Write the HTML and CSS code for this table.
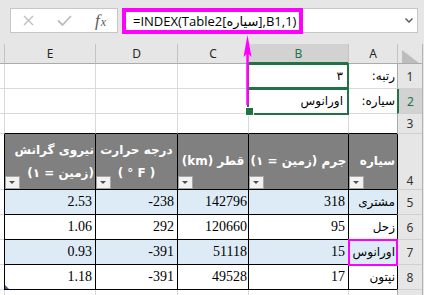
FILE: index.html
```html
<!DOCTYPE html>
<html lang="fa">
<head>
<meta charset="utf-8">
<link rel="stylesheet" href="styles.css">
</head>
<body>
<div class="toolbar">
  <div class="fxbox">
    <svg class="i-x" width="11" height="11" viewBox="0 0 11 11"><path d="M1 1L10 10M10 1L1 10"/></svg>
    <svg class="i-ok" width="15" height="11" viewBox="0 0 15 11"><path d="M1 5.5L5.5 10L14 1"/></svg>
    <span class="fx"><i class="fx-f">f</i><i class="fx-x">x</i></span>
  </div>
  <div class="fbar">
    <div class="formula" dir="ltr">=INDEX(Table2[سیاره],B1,1)</div>
    <svg class="chev" width="8" height="5" viewBox="0 0 8 5"><path d="M0.5 0.5L4 4L7.5 0.5"/></svg>
  </div>
</div>

<div class="sheet" dir="rtl">
  <div class="row">
    <div class="c strip"></div>
    <div class="c colh corner"><svg width="17" height="13" viewBox="0 0 17 13"><path d="M0 0V13H17Z"/></svg></div>
    <div class="c colh">A</div>
    <div class="c colh sel">B</div>
    <div class="c colh">C</div>
    <div class="c colh">D</div>
    <div class="c colh">E</div>
    <div class="c colh f"></div>
  </div>

  <div class="row">
    <div class="c strip"></div>
    <div class="c rh">1</div>
    <div class="c ca"><span class="ar">رتبه:</span></div>
    <div class="c cb sel1"><span class="ar">۳</span></div>
    <div class="c"></div>
    <div class="c"></div>
    <div class="c"></div>
    <div class="c f"></div>
  </div>

  <div class="row">
    <div class="c strip"></div>
    <div class="c rh sel">2</div>
    <div class="c ca"><span class="ar">سیاره:</span></div>
    <div class="c cb sel2"><span class="ar">اورانوس</span></div>
    <div class="c"></div>
    <div class="c"></div>
    <div class="c"></div>
    <div class="c f"></div>
  </div>

  <div class="row">
    <div class="c strip"></div>
    <div class="c rh">3</div>
    <div class="c tt"></div>
    <div class="c tt"></div>
    <div class="c tt"></div>
    <div class="c tt"></div>
    <div class="c tt"></div>
    <div class="c f"></div>
  </div>

  <div class="row">
    <div class="c strip"></div>
    <div class="c rh tb low">4</div>
    <div class="c th"><span>سیاره</span><span class="dd"></span></div>
    <div class="c th mid"><span>جرم (زمین = ۱)</span><span class="dd"></span></div>
    <div class="c th mid"><span>قطر (km)</span><span class="dd"></span></div>
    <div class="c th mid"><span>درجه حرارت</span><span dir="ltr">( ° F )</span><span class="dd"></span></div>
    <div class="c th te"><span>نیروی گرانش</span><span>(زمین = ۱)</span><span class="dd"></span></div>
    <div class="c f"></div>
  </div>

  <div class="row">
    <div class="c strip"></div>
    <div class="c rh tb">5</div>
    <div class="c td alt ca"><span class="ar">مشتری</span></div>
    <div class="c td alt num">318</div>
    <div class="c td alt num cc">142796</div>
    <div class="c td alt num">-238</div>
    <div class="c td alt num">2.53</div>
    <div class="c f"></div>
  </div>

  <div class="row">
    <div class="c strip"></div>
    <div class="c rh tb">6</div>
    <div class="c td ca"><span class="ar">زحل</span></div>
    <div class="c td num">95</div>
    <div class="c td num cc">120660</div>
    <div class="c td num">292</div>
    <div class="c td num">1.06</div>
    <div class="c f"></div>
  </div>

  <div class="row">
    <div class="c strip"></div>
    <div class="c rh tb">7</div>
    <div class="c td alt ca mark"><span class="ar">اورانوس</span></div>
    <div class="c td alt num">15</div>
    <div class="c td alt num cc">51118</div>
    <div class="c td alt num">-391</div>
    <div class="c td alt num">0.93</div>
    <div class="c f"></div>
  </div>

  <div class="row">
    <div class="c strip"></div>
    <div class="c rh tb">8</div>
    <div class="c td ca"><span class="ar">نپتون</span></div>
    <div class="c td num">17</div>
    <div class="c td num cc">49528</div>
    <div class="c td num">-391</div>
    <div class="c td num corner-mark">1.18</div>
    <div class="c f"></div>
  </div>

  <div class="row">
    <div class="c strip"></div>
    <div class="c rh"></div>
    <div class="c"></div>
    <div class="c"></div>
    <div class="c"></div>
    <div class="c"></div>
    <div class="c"></div>
    <div class="c f"></div>
  </div>
</div>

<svg class="arrow" width="16" height="80" viewBox="0 0 16 80">
  <path class="shaft" d="M7.5 16V72"/>
  <path class="head" d="M7.5 2L11.5 24L7.5 20L3.5 24Z"/>
</svg>
</body>
</html>
```

FILE: styles.css
```css
* { box-sizing: border-box; }
html, body { margin: 0; padding: 0; }
body {
  width: 424px;
  height: 295px;
  overflow: hidden;
  position: relative;
  background: #e6e6e6;
  font-family: "Noto Sans", "DejaVu Sans", sans-serif;
}

/* formula bar */
.toolbar {
  height: 44px;
  display: flex;
  align-items: flex-start;
  padding: 8px 0 0 10px;
  gap: 4px;
}
.fxbox {
  width: 108px;
  height: 25px;
  border: 1px solid #c6c6c6;
  background: #fff;
  display: flex;
  align-items: center;
}
.i-x { margin-left: 12px; fill: none; stroke: #bdbdbd; stroke-width: 1.3; }
.i-ok { margin-left: 23px; fill: none; stroke: #bdbdbd; stroke-width: 1.8; }
.fx {
  margin-left: 23px;
  font-family: "Liberation Serif", serif;
  color: #5a5a5a;
  display: flex;
  align-items: baseline;
}
.fx-f { font-size: 17px; }
.fx-x { font-size: 12px; margin-left: 1px; }

.fbar {
  width: 296px;
  height: 25px;
  border: 1px solid #c6c6c6;
  background: #fff;
  display: flex;
  align-items: center;
}
.formula {
  width: 181px;
  height: 26px;
  margin-left: -1px;
  border: 4px solid #ff00ff;
  padding-left: 7px;
  display: flex;
  align-items: center;
  font-family: "Open Sans", "DejaVu Sans", sans-serif;
  font-size: 13px;
  color: #000;
  white-space: nowrap;
}
.chev { margin-left: auto; margin-right: 4px; fill: none; stroke: #555; stroke-width: 1.4; }

/* sheet grid */
.sheet {
  display: grid;
  grid-template-columns: 2px 25px 49px 100px 71px 82px 91px 4px;
  grid-template-rows: 20px 25px 25px 20px 56px repeat(5, 25px);
}
.row { display: contents; }
.c {
  position: relative;
  background: #fff;
  border-left: 1px solid #dadada;
  border-bottom: 1px solid #dadada;
  display: flex;
  align-items: center;
  justify-content: flex-start;
  padding: 0 3px;
  white-space: nowrap;
  min-width: 0;
  font-family: "Liberation Serif", "DejaVu Sans", serif;
  font-size: 14px;
  color: #000;
}
.num { direction: ltr; justify-content: flex-end; }
.ar { font-family: "DejaVu Sans", sans-serif; font-size: 12px; }
.ca { padding: 0 2px; }
.cb { padding: 0 5px; }
.cc { padding: 0 1px; }
.f { border-left: 0; }
.strip { background: #e6e6e6; border-left: 1px solid #b4b4b4; border-bottom: 0; padding: 0; }

.colh {
  background: #e6e6e6;
  border-left-color: #c3c3c3;
  border-bottom-color: #ababab;
  justify-content: center;
  padding: 0;
  font-family: "Noto Sans", sans-serif;
  font-size: 12px;
  color: #262626;
}
.colh.sel { background: #d2d2d2; color: #217346; border-bottom: 2px solid #217346; }
.corner { align-items: flex-end; }
.corner svg { fill: #bdbdbd; display: block; }

.rh {
  background: #e6e6e6;
  border-left-color: #ababab;
  border-bottom-color: #d0d0d0;
  justify-content: center;
  padding: 0;
  font-family: "Noto Sans", sans-serif;
  font-size: 12px;
  color: #333;
}
.rh.sel { background: #d2d2d2; color: #217346; border-left: 2px solid #217346; }
.rh.tb { border-left-color: #000; }
.rh.low { align-items: flex-end; padding-bottom: 0; }

.tt { border-bottom-color: #000; }

.th {
  background: #808080;
  color: #fff;
  font-weight: bold;
  border-left-color: #000;
  border-bottom-color: #000;
  flex-direction: column;
  justify-content: center;
  align-items: flex-start;
  line-height: 23px;
  padding: 0 2px;
  font-family: "DejaVu Sans", sans-serif;
  font-size: 12px;
}
.th.mid { align-items: center; }
.th.te { padding: 0 1px; }
.dd {
  position: absolute;
  left: 0;
  bottom: 0;
  width: 15px;
  height: 13px;
  background: #f2f2f2;
  border: 1px solid #a6a6a6;
}
.dd::after {
  content: "";
  position: absolute;
  left: 3px;
  top: 4px;
  border-left: 3.5px solid transparent;
  border-right: 3.5px solid transparent;
  border-top: 3.5px solid #505050;
}

.td { border-left-color: #000; border-bottom-color: #000; }
.alt { background: #ddebf7; }

/* selection and annotation overlays */
.sel1::after, .sel2::after {
  content: "";
  position: absolute;
  z-index: 2;
  left: -2px;
  right: -1px;
  border: 2px solid #217346;
}
.sel1::after { top: -1px; bottom: -1px; }
.sel2::after { top: -1px; bottom: -2px; }
.sel2::before {
  content: "";
  position: absolute;
  z-index: 3;
  left: -4px;
  bottom: -3px;
  width: 7px;
  height: 7px;
  background: #217346;
  border: 1px solid #fff;
}
.mark::after {
  content: "";
  position: absolute;
  z-index: 2;
  top: -1px;
  bottom: -2px;
  left: -1px;
  right: -1px;
  border: 2px solid #ff00ff;
}
.corner-mark::before {
  content: "";
  position: absolute;
  left: 0;
  bottom: 0;
  border-left: 4px solid #3b5ca8;
  border-top: 4px solid transparent;
}

.arrow { position: absolute; left: 240px; top: 33px; z-index: 5; }
.shaft { stroke: #ff00ff; stroke-width: 2.5; fill: none; }
.head { fill: #ff00ff; }
```
